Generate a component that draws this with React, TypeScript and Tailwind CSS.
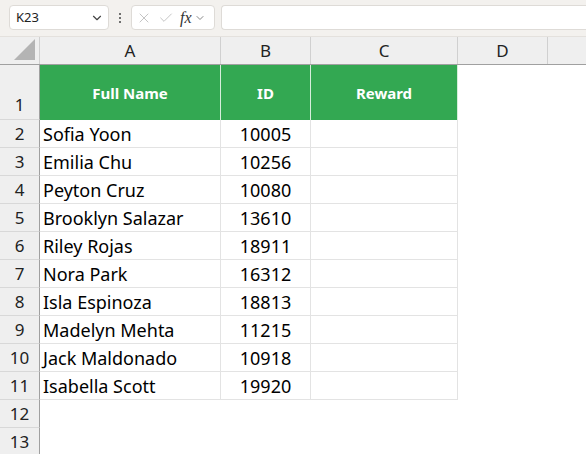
import { ChevronDown, X, Check } from "lucide-react";

const ROWS = [
  ["Sofia Yoon", "10005"],
  ["Emilia Chu", "10256"],
  ["Peyton Cruz", "10080"],
  ["Brooklyn Salazar", "13610"],
  ["Riley Rojas", "18911"],
  ["Nora Park", "16312"],
  ["Isla Espinoza", "18813"],
  ["Madelyn Mehta", "11215"],
  ["Jack Maldonado", "10918"],
  ["Isabella Scott", "19920"],
];

const font = { fontFamily: '"Noto Sans", "Open Sans", sans-serif' };

function RowNum({ n, tall }: { n: number; tall?: boolean }) {
  return (
    <div
      className={`w-[40px] shrink-0 bg-[#efefef] border-r border-[#a0a0a0] border-b border-b-[#d8d8d8] flex justify-center ${
        tall ? "items-end pb-[2px]" : "items-center pt-[1px]"
      } text-[17px] text-[#222]`}
    >
      {n}
    </div>
  );
}

export default function App() {
  return (
    <div className="w-[586px] h-[454px] overflow-hidden bg-white" style={font}>
      {/* Formula bar */}
      <div className="h-[37px] bg-[#f3f1ee] flex items-start pt-[5px] border-b border-[#e4e1dd]">
        <div className="ml-[9px] w-[100px] h-[25px] bg-white rounded-[4px] border border-[#dedbd7] flex items-center justify-between pl-[6px] pr-[4px]">
          <span className="text-[13px] text-[#222]">K23</span>
          <ChevronDown size={14} className="text-[#444]" />
        </div>
        <div className="w-[22px] h-[25px] flex flex-col items-center justify-center gap-[2px]">
          <span className="w-[2px] h-[2px] bg-[#444] rounded-full" />
          <span className="w-[2px] h-[2px] bg-[#444] rounded-full" />
          <span className="w-[2px] h-[2px] bg-[#444] rounded-full" />
        </div>
        <div className="w-[84px] h-[25px] bg-white rounded-[4px] border border-[#dedbd7] flex items-center pl-[4px] gap-[6px]">
          <X size={16} strokeWidth={1.2} className="text-[#b5b5b5]" />
          <Check size={16} strokeWidth={1.2} className="text-[#b5b5b5]" />
          <span
            className="text-[16px] italic text-[#333] leading-none -mr-[4px]"
            style={{ fontFamily: '"Liberation Serif", serif' }}
          >
            fx
          </span>
          <ChevronDown size={12} className="text-[#888]" />
        </div>
        <div className="ml-[6px] flex-1 h-[25px] bg-white rounded-l-[4px] border border-r-0 border-[#dedbd7]" />
      </div>

      {/* Column headers */}
      <div className="flex h-[28px] bg-[#efefef] border-b border-[#a0a0a0]">
        <div className="w-[40px] shrink-0 border-r border-[#d0d0d0] relative">
          <svg width="22" height="22" className="absolute right-[3px] bottom-[3px]">
            <polygon points="21,0 21,21 0,21" fill="#b4b4b4" />
          </svg>
        </div>
        {[
          ["A", "w-[181px]"],
          ["B", "w-[90px]"],
          ["C", "w-[147px]"],
          ["D", "w-[90px]"],
        ].map(([l, w]) => (
          <div
            key={l}
            className={`${w} shrink-0 border-r border-[#d0d0d0] flex items-center justify-center text-[17px] text-[#222]`}
          >
            {l}
          </div>
        ))}
        <div className="flex-1" />
      </div>

      {/* Row 1 header */}
      <div className="flex h-[55px]">
        <RowNum n={1} tall />
        <div className="w-[181px] shrink-0 bg-[#33a852] border-r border-[#d6eedb] flex items-center justify-center pt-[2px] text-white font-bold text-[15px]">
          Full Name
        </div>
        <div className="w-[90px] shrink-0 bg-[#33a852] border-r border-[#d6eedb] flex items-center justify-center pt-[2px] text-white font-bold text-[15px]">
          ID
        </div>
        <div className="w-[147px] shrink-0 bg-[#33a852] border-r border-[#d6eedb] flex items-center justify-center pt-[2px] text-white font-bold text-[15px]">
          Reward
        </div>
      </div>

      {ROWS.map(([name, id], i) => (
        <div key={id} className="flex h-[28px]">
          <RowNum n={i + 2} />
          <div className="w-[181px] shrink-0 border-r border-b border-[#e3e3e3] flex items-center pl-[3px] pt-[2px] text-[18px] text-black">
            {name}
          </div>
          <div className="w-[90px] shrink-0 border-r border-b border-[#e3e3e3] flex items-center justify-center pt-[2px] text-[18px] text-black">
            {id}
          </div>
          <div className="w-[147px] shrink-0 border-r border-b border-[#e3e3e3]" />
        </div>
      ))}

      {[12, 13].map((n) => (
        <div key={n} className="flex h-[28px]">
          <RowNum n={n} />
        </div>
      ))}
    </div>
  );
}
